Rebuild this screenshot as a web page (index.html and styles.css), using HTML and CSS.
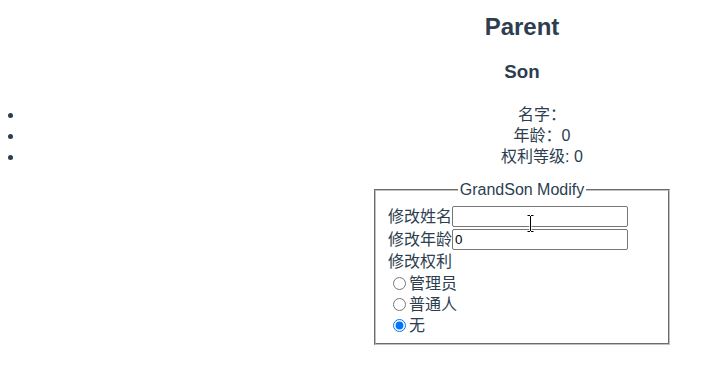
FILE: index.html
```html
<!DOCTYPE html>
<html lang="zh-CN">
<head>
<meta charset="utf-8">
<title>Parent</title>
<link rel="stylesheet" href="styles.css">
</head>
<body>
<div id="app">
  <h2 class="parent-title">Parent</h2>
  <h3 class="son-title">Son</h3>
  <ul class="info-list">
    <li>名字：</li>
    <li>年龄：0</li>
    <li>权利等级: 0</li>
  </ul>
  <fieldset class="grandson">
    <legend class="grandson-legend">GrandSon Modify</legend>
    <div class="grandson-body">
      <div class="field-row">
        <label class="field-label" for="name">修改姓名</label>
        <span class="field-box">
          <input class="text-input" id="name" type="text" value="">
          <svg class="ibeam" width="7" height="17" viewBox="0 0 7 17" aria-hidden="true">
            <path d="M0 0.5h3M4 0.5h3M3.5 1v15M0 16.5h3M4 16.5h3" stroke="#fff" stroke-width="2.4" fill="none"/>
            <path d="M0.5 0.5h2.5M4 0.5h2.5M3.5 1v15M0.5 16.5h2.5M4 16.5h2.5" stroke="#000" stroke-width="1" fill="none"/>
          </svg>
        </span>
      </div>
      <div class="field-row">
        <label class="field-label" for="age">修改年龄</label>
        <span class="field-box">
          <input class="text-input" id="age" type="text" value="0">
        </span>
      </div>
      <div class="group-label">修改权利</div>
      <label class="radio-row"><input class="radio" type="radio" name="level" value="1">管理员</label>
      <label class="radio-row"><input class="radio" type="radio" name="level" value="2">普通人</label>
      <label class="radio-row"><input class="radio" type="radio" name="level" value="0" checked>无</label>
    </div>
  </fieldset>
</div>
</body>
</html>
```

FILE: styles.css
```css
html, body {
  margin: 0;
  padding: 0;
  background: #fff;
}

#app {
  padding-left: 318px;
  text-align: center;
  color: #2c3e50;
  font-family: "Liberation Sans", Arial, "Noto Sans CJK SC", sans-serif;
  font-size: 16px;
}

.parent-title {
  font-size: 24px;
  font-weight: bold;
  margin: 13px 0 20px;
}

.son-title {
  font-size: 18.72px;
  font-weight: bold;
  margin: 20px 0 0;
}

.info-list {
  margin: 21px 0 12px -294px;
  padding-left: 0;
  line-height: 21px;
}

.info-list li {
  padding-left: 334px;
}

.grandson {
  width: 296px;
  box-sizing: border-box;
  margin: 0 auto;
  padding: 5px 12px 7px;
  border: 2px groove rgb(192, 192, 192);
  text-align: center;
}

.grandson-legend {
  padding: 0 2px;
  margin: 0 auto;
  line-height: 21px;
}

.grandson-body {
  text-align: left;
  line-height: 21px;
}

.field-row {
  display: flex;
  align-items: center;
  height: 23px;
}

.field-box {
  position: relative;
  display: block;
}

.text-input {
  display: block;
  width: 176px;
  height: 21px;
  box-sizing: border-box;
  margin: 0;
  padding: 1px 2px;
  border: 1px solid #767676;
  border-radius: 2px;
  font-family: "Liberation Sans", Arial, sans-serif;
  font-size: 13.33px;
  color: #000;
  background: #fff;
}

.ibeam {
  position: absolute;
  left: 75px;
  top: 9px;
  z-index: 2;
}

.group-label {
  height: 22px;
}

.radio-row {
  display: flex;
  align-items: center;
  height: 21px;
}

.radio {
  width: 13px;
  height: 13px;
  margin: 0 3px 0 5px;
}
```
